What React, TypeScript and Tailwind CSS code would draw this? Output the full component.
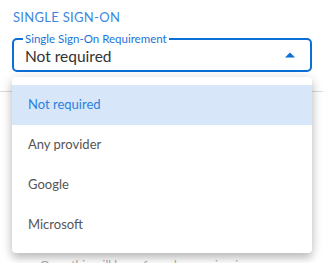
import React from "react";

export default function App() {
  const items = ["Not required", "Any provider", "Google", "Microsoft"];
  return (
    <div
      className="relative w-[323px] h-[263px] overflow-hidden bg-white"
      style={{ fontFamily: "Lato, 'Noto Sans', sans-serif" }}
    >
      <div className="px-3 pt-[8px]">
        <div className="text-[13px] leading-[18px] tracking-[0.3px] text-[#3b87dc] pl-[1px]">SINGLE SIGN-ON</div>
        <fieldset className="mt-[8px] h-[38px] w-[300px] rounded-[5px] border-2 border-[#0b6fd6] pl-[11px] pr-[9px] pb-[4px] relative">
          <legend className="ml-[-2px] px-[2px] text-[11.5px] leading-[10px] text-[#1a75d8]">Single Sign-On Requirement</legend>
          <div className="flex items-center justify-between pr-[6px] mt-[2px]">
            <span className="text-[15.5px] leading-[20px] text-[#333]">Not required</span>
            <svg width="10" height="6" viewBox="0 0 10 6" className="mt-[-2px]">
              <path d="M0 5.5 L5 0.5 L10 5.5 Z" fill="#0b6fd6" />
            </svg>
          </div>
        </fieldset>
      </div>
      <div className="mt-[19px] border-t border-[#dcdcdc] w-full" />
      <div className="px-[40px] mt-[164px] text-[12px] text-[#aaa]">Once this will be enforced upon sign-in users</div>

      <div className="absolute left-[12px] top-[77px] w-[300px] rounded-[4px] bg-white py-[8px] shadow-[0_5px_8px_rgba(0,0,0,0.22),0_1px_14px_rgba(0,0,0,0.1)]">
        {items.map((it, i) => (
          <div
            key={it}
            className={
              "h-[40px] flex items-center pl-[16px] text-[13px] " +
              (i === 0 ? "bg-[#d7e7f9] text-[#2b80e0]" : "text-[#555]")
            }
          >
            {it}
          </div>
        ))}
      </div>
    </div>
  );
}
